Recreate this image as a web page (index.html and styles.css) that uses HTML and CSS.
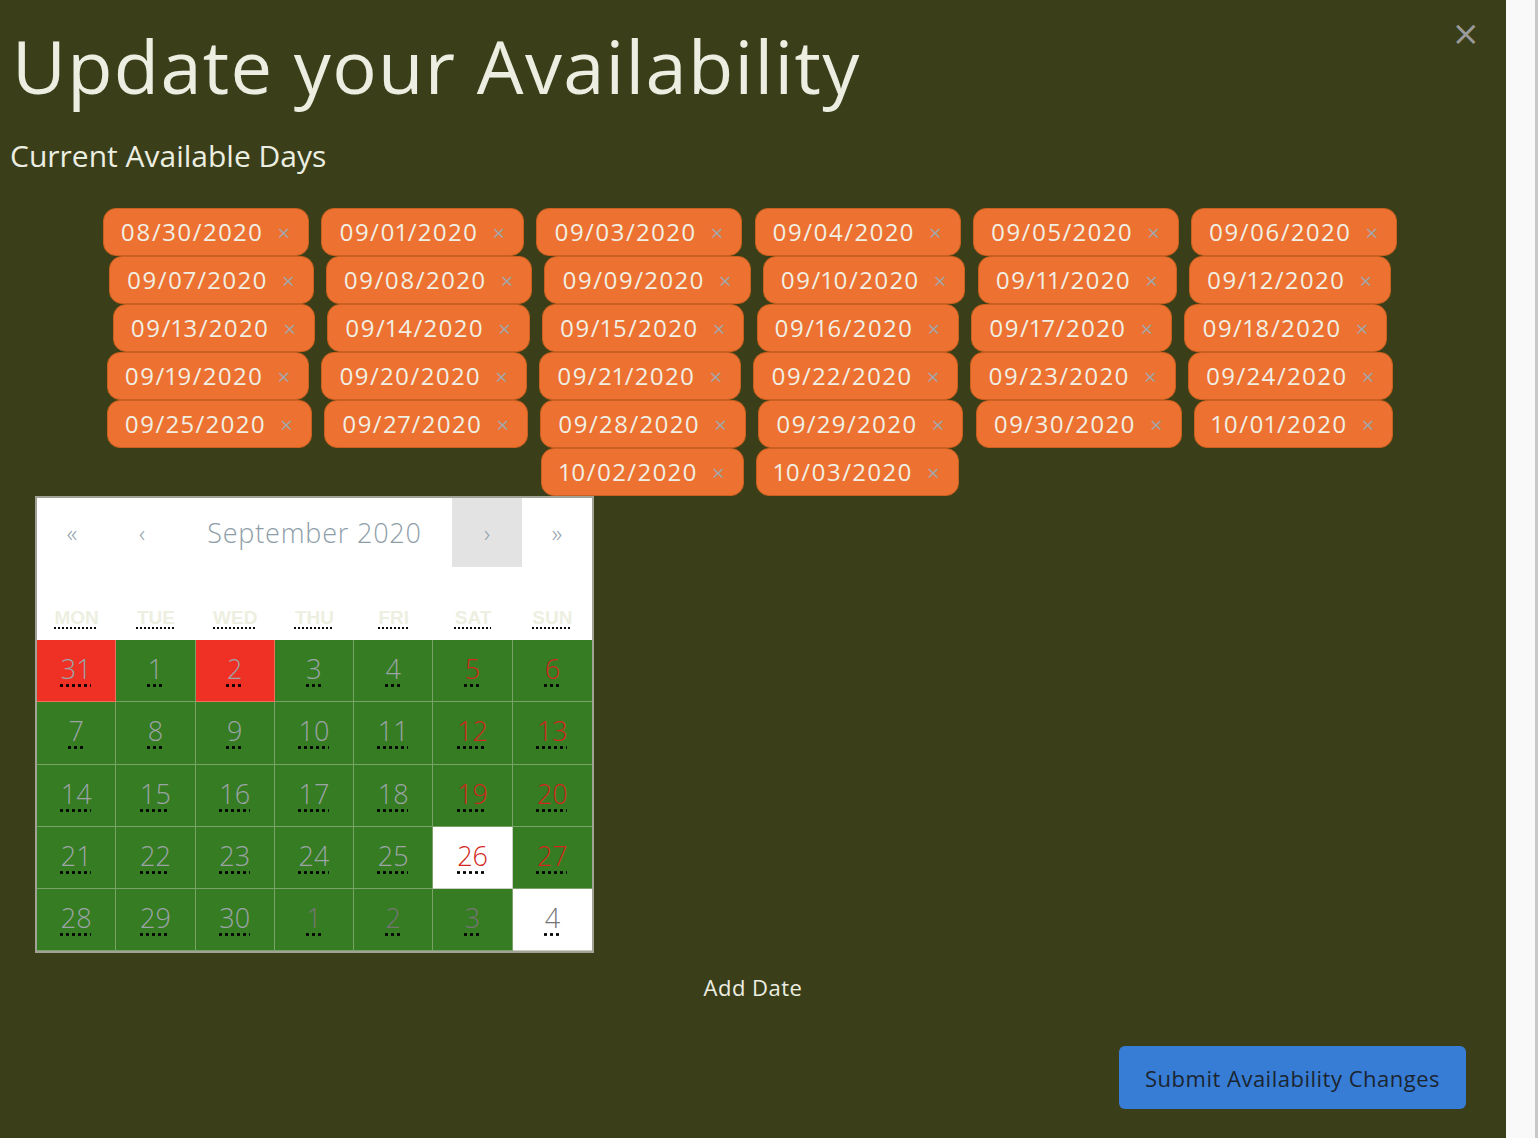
FILE: index.html
```html
<!DOCTYPE html>
<html>
<head>
<meta charset="utf-8">
<link rel="stylesheet" href="styles.css">
</head>
<body>
<div class="page">
  <div class="modal">
    <button class="close" aria-label="Close">×</button>
    <h1 class="title">Update your Availability</h1>
    <h2 class="subtitle">Current Available Days</h2>
    <div class="chips">
      <span class="chip">08/30/2020<span class="x">×</span></span>
      <span class="chip">09/01/2020<span class="x">×</span></span>
      <span class="chip">09/03/2020<span class="x">×</span></span>
      <span class="chip">09/04/2020<span class="x">×</span></span>
      <span class="chip">09/05/2020<span class="x">×</span></span>
      <span class="chip">09/06/2020<span class="x">×</span></span>
      <span class="chip">09/07/2020<span class="x">×</span></span>
      <span class="chip">09/08/2020<span class="x">×</span></span>
      <span class="chip">09/09/2020<span class="x">×</span></span>
      <span class="chip">09/10/2020<span class="x">×</span></span>
      <span class="chip">09/11/2020<span class="x">×</span></span>
      <span class="chip">09/12/2020<span class="x">×</span></span>
      <span class="chip">09/13/2020<span class="x">×</span></span>
      <span class="chip">09/14/2020<span class="x">×</span></span>
      <span class="chip">09/15/2020<span class="x">×</span></span>
      <span class="chip">09/16/2020<span class="x">×</span></span>
      <span class="chip">09/17/2020<span class="x">×</span></span>
      <span class="chip">09/18/2020<span class="x">×</span></span>
      <span class="chip">09/19/2020<span class="x">×</span></span>
      <span class="chip">09/20/2020<span class="x">×</span></span>
      <span class="chip">09/21/2020<span class="x">×</span></span>
      <span class="chip">09/22/2020<span class="x">×</span></span>
      <span class="chip">09/23/2020<span class="x">×</span></span>
      <span class="chip">09/24/2020<span class="x">×</span></span>
      <span class="chip">09/25/2020<span class="x">×</span></span>
      <span class="chip">09/27/2020<span class="x">×</span></span>
      <span class="chip">09/28/2020<span class="x">×</span></span>
      <span class="chip">09/29/2020<span class="x">×</span></span>
      <span class="chip">09/30/2020<span class="x">×</span></span>
      <span class="chip">10/01/2020<span class="x">×</span></span>
      <span class="chip">10/02/2020<span class="x">×</span></span>
      <span class="chip">10/03/2020<span class="x">×</span></span>
    </div>
    <div class="calendar">
      <div class="cal-nav">
        <button class="nav-btn">«</button>
        <button class="nav-btn">‹</button>
        <button class="nav-label">September 2020</button>
        <button class="nav-btn hover">›</button>
        <button class="nav-btn">»</button>
      </div>
      <div class="weekdays">
        <div><abbr title="Monday">Mon</abbr></div>
        <div><abbr title="Tuesday">Tue</abbr></div>
        <div><abbr title="Wednesday">Wed</abbr></div>
        <div><abbr title="Thursday">Thu</abbr></div>
        <div><abbr title="Friday">Fri</abbr></div>
        <div><abbr title="Saturday">Sat</abbr></div>
        <div><abbr title="Sunday">Sun</abbr></div>
      </div>
      <div class="days">
        <button class="tile red"><abbr title="August 31, 2020">31</abbr></button>
        <button class="tile green"><abbr title="September 1, 2020">1</abbr></button>
        <button class="tile red"><abbr title="September 2, 2020">2</abbr></button>
        <button class="tile green"><abbr title="September 3, 2020">3</abbr></button>
        <button class="tile green"><abbr title="September 4, 2020">4</abbr></button>
        <button class="tile green weekend"><abbr title="September 5, 2020">5</abbr></button>
        <button class="tile green weekend"><abbr title="September 6, 2020">6</abbr></button>

        <button class="tile green"><abbr title="September 7, 2020">7</abbr></button>
        <button class="tile green"><abbr title="September 8, 2020">8</abbr></button>
        <button class="tile green"><abbr title="September 9, 2020">9</abbr></button>
        <button class="tile green"><abbr title="September 10, 2020">10</abbr></button>
        <button class="tile green"><abbr title="September 11, 2020">11</abbr></button>
        <button class="tile green weekend"><abbr title="September 12, 2020">12</abbr></button>
        <button class="tile green weekend"><abbr title="September 13, 2020">13</abbr></button>

        <button class="tile green"><abbr title="September 14, 2020">14</abbr></button>
        <button class="tile green"><abbr title="September 15, 2020">15</abbr></button>
        <button class="tile green"><abbr title="September 16, 2020">16</abbr></button>
        <button class="tile green"><abbr title="September 17, 2020">17</abbr></button>
        <button class="tile green"><abbr title="September 18, 2020">18</abbr></button>
        <button class="tile green weekend"><abbr title="September 19, 2020">19</abbr></button>
        <button class="tile green weekend"><abbr title="September 20, 2020">20</abbr></button>

        <button class="tile green"><abbr title="September 21, 2020">21</abbr></button>
        <button class="tile green"><abbr title="September 22, 2020">22</abbr></button>
        <button class="tile green"><abbr title="September 23, 2020">23</abbr></button>
        <button class="tile green"><abbr title="September 24, 2020">24</abbr></button>
        <button class="tile green"><abbr title="September 25, 2020">25</abbr></button>
        <button class="tile white weekend"><abbr title="September 26, 2020">26</abbr></button>
        <button class="tile green weekend"><abbr title="September 27, 2020">27</abbr></button>

        <button class="tile green"><abbr title="September 28, 2020">28</abbr></button>
        <button class="tile green"><abbr title="September 29, 2020">29</abbr></button>
        <button class="tile green"><abbr title="September 30, 2020">30</abbr></button>
        <button class="tile green neighbor"><abbr title="October 1, 2020">1</abbr></button>
        <button class="tile green neighbor"><abbr title="October 2, 2020">2</abbr></button>
        <button class="tile green neighbor"><abbr title="October 3, 2020">3</abbr></button>
        <button class="tile white neighbor"><abbr title="October 4, 2020">4</abbr></button>
      </div>
    </div>
    <div class="add">Add Date</div>
    <div class="footer">
      <button class="submit">Submit Availability Changes</button>
    </div>
  </div>
  <div class="side"></div>
</div>
</body>
</html>
```

FILE: styles.css
```css
html, body {
  margin: 0;
  padding: 0;
  height: 100%;
}

body {
  font-family: "Open Sans", "Noto Sans", sans-serif;
  background: #f9f9f9;
}

.page {
  display: flex;
  height: 1138px;
  overflow: hidden;
}

.modal {
  position: relative;
  width: 1506px;
  flex: none;
  background: #3b3f19;
  color: #eceee2;
}

.side {
  flex: 1;
  background: #f9f9f9;
  border-right: 3px solid #c8c8c8;
}

.close {
  position: absolute;
  top: 16px;
  right: 26px;
  background: none;
  border: none;
  padding: 0;
  color: #9a9a9a;
  font-family: "DejaVu Sans", sans-serif;
  font-size: 34px;
  line-height: 1;
  cursor: pointer;
}

.title {
  margin: 0;
  padding: 18px 0 0 12px;
  font-weight: 400;
  font-size: 74px;
  line-height: 96px;
  letter-spacing: 1.3px;
}

.subtitle {
  margin: 0;
  padding: 22px 0 0 10px;
  font-weight: 400;
  font-size: 30px;
  line-height: 40px;
}

.chips {
  width: 1310px;
  margin: 32px 0 0 95px;
  text-align: center;
  font-size: 24px;
  line-height: 0;
}

.chip {
  display: inline-block;
  box-sizing: border-box;
  height: 48px;
  margin: 0 3px;
  padding: 0 18px 0 17px;
  background: #ed7130;
  border: 1px solid #c9601f;
  border-radius: 13px;
  color: #f1efe4;
  font-size: 24px;
  line-height: 46px;
  letter-spacing: 1.5px;
  font-variant-numeric: proportional-nums;
  vertical-align: top;
}

.chip .x {
  margin-left: 14px;
  color: #a3a6a8;
  font-size: 22px;
  letter-spacing: 0;
}

.calendar {
  width: 555px;
  margin-left: 35px;
  background: #fff;
  border: 2px solid #a1a195;
  font-family: "Open Sans", sans-serif;
}

.cal-nav {
  display: flex;
  height: 69px;
}

.cal-nav button {
  border: none;
  background: none;
  padding: 0;
  margin: 0;
  color: #8e9ea9;
  font-family: "Open Sans", sans-serif;
  font-weight: 300;
}

.nav-btn {
  width: 70px;
  flex: none;
  font-size: 24px;
}

.cal-nav .nav-btn.hover {
  background: #e3e3e3;
}

.nav-label {
  flex: 1;
  font-size: 27px;
  letter-spacing: 0.8px;
}

.weekdays {
  display: grid;
  grid-template-columns: repeat(7, 1fr);
  height: 73px;
  align-items: end;
  text-align: center;
  text-transform: uppercase;
  font-family: "Liberation Sans", Arial, sans-serif;
  font-weight: 700;
  font-size: 19px;
  color: #edefe1;
}

.weekdays div {
  padding-bottom: 11px;
}

.weekdays abbr {
  text-decoration: underline dotted #000;
  text-underline-offset: 4px;
}

.days {
  display: grid;
  grid-template-columns: repeat(7, 1fr);
  grid-auto-rows: 62.3px;
}

.tile {
  margin: 0;
  padding: 0 0 4px;
  border: 1px solid #78a266;
  border-width: 0 1px 1px 0;
  font-family: "Open Sans", sans-serif;
  font-weight: 300;
  font-size: 27px;
  color: #9ca4a8;
  background: #367c22;
}

.tile:nth-child(7n) {
  border-right: none;
}

.tile abbr {
  text-decoration: underline dotted #000;
  text-underline-offset: 5px;
}

.tile.red {
  background: #ee3124;
  border-color: #f07060;
}

.tile.white {
  background: #fff;
  border-color: #c8d0c2;
}

.tile.weekend {
  color: #d1271c;
}

.tile.neighbor {
  color: #757575;
}

.add {
  margin-top: 20px;
  text-align: center;
  font-size: 22px;
  line-height: 28px;
  letter-spacing: 0.5px;
}

.footer {
  display: flex;
  justify-content: flex-end;
  padding: 45px 40px 0 0;
}

.submit {
  width: 347px;
  height: 63px;
  border: none;
  border-radius: 6px;
  background: #377dd6;
  color: #1b2530;
  font-family: "Open Sans", sans-serif;
  font-size: 22px;
  letter-spacing: 0.5px;
}
```
